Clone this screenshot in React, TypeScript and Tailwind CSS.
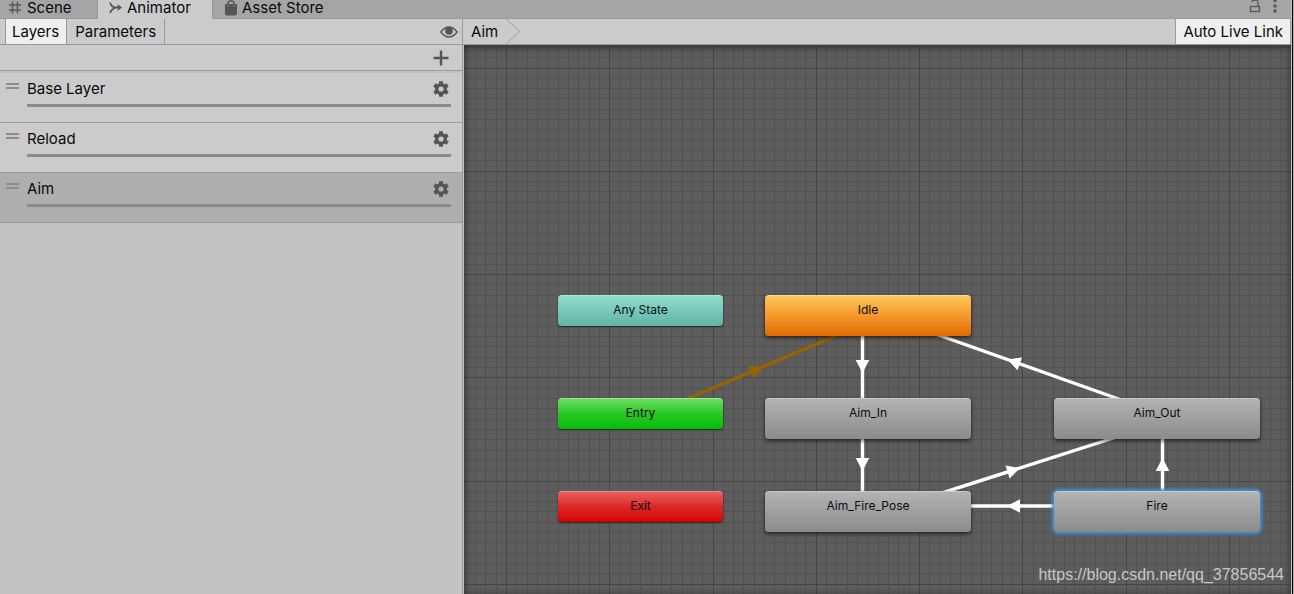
import React from "react";

type StateNode = { label: string; box: string };

const small = "h-[31px] w-[165px] shadow-[0_1px_2px_rgba(0,0,0,0.6)]";
const large = "h-[41px] w-[206px]";
const gray = "from-[#b4b4b4] to-[#8b8b8b]";
const lift = "shadow-[0_2px_4px_rgba(0,0,0,0.6)]";

const nodes: StateNode[] = [
  { label: "Any State", box: `left-[94px] top-[250px] ${small} from-[#8fdfcd] to-[#60b3a7]` },
  { label: "Idle", box: `left-[301px] top-[250px] ${large} ${lift} from-[#ffc95c] via-[#f4992a] to-[#e06c00]` },
  { label: "Entry", box: `left-[94px] top-[353px] ${small} from-[#6be062] via-[#25c822] to-[#03bc06]` },
  { label: "Aim_In", box: `left-[301px] top-[353px] ${large} ${lift} ${gray}` },
  { label: "Aim_Out", box: `left-[590px] top-[353px] ${large} ${lift} ${gray}` },
  { label: "Exit", box: `left-[94px] top-[446px] ${small} from-[#e75f5f] via-[#dd2626] to-[#d60000]` },
  { label: "Aim_Fire_Pose", box: `left-[301px] top-[446px] ${large} ${lift} ${gray}` },
  { label: "Fire", box: `left-[590px] top-[446px] ${large} shadow-[0_0_3px_2px_#3d8fdd] ${gray}` },
];

const links = [
  { from: [176, 374], to: [404, 277], tip: [299, 322], color: "#966400" },
  { from: [398.5, 280], to: [398.5, 360], tip: [398.5, 328], color: "#fff" },
  { from: [398.5, 380], to: [398.5, 450], tip: [398.5, 426], color: "#fff" },
  { from: [694, 368], to: [404, 265], tip: [543.5, 314.5], color: "#fff" },
  { from: [400, 473], to: [690, 380], tip: [556, 423], color: "#fff" },
  { from: [600, 461], to: [490, 461], tip: [543, 461], color: "#fff" },
  { from: [698.5, 460], to: [698.5, 380], tip: [698.5, 413], color: "#fff" },
];

const steps = Array.from({ length: 40 }, (_, i) => i);

function Grid() {
  return (
    <svg className="absolute inset-0 h-full w-full" aria-hidden="true">
      <defs>
        <pattern id="grid" x="42" y="23" width="413" height="413" patternUnits="userSpaceOnUse">
          {steps.map((i) => {
            const at = i * 10.325;
            const fill = i % 10 === 0 ? "#454545" : "#525252";
            return (
              <g key={i} fill={fill} shapeRendering="crispEdges">
                <rect x={Math.round(at)} width="1" height="413" />
                <rect y={Math.floor(at)} width="413" height="1" />
              </g>
            );
          })}
        </pattern>
      </defs>
      <rect width="100%" height="100%" fill="url(#grid)" />
    </svg>
  );
}

function Links() {
  return (
    <svg className="absolute inset-0 h-full w-full" aria-hidden="true">
      {links.map(({ from, to, tip, color }, i) => {
        const angle = (Math.atan2(to[1] - from[1], to[0] - from[0]) * 180) / Math.PI;
        return (
          <g key={i} fill={color} stroke={color}>
            <line x1={from[0]} y1={from[1]} x2={to[0]} y2={to[1]} strokeWidth="3.4" />
            <path
              d="M0 0L-13-6.8V6.8Z"
              stroke="none"
              transform={`translate(${tip[0]} ${tip[1]}) rotate(${angle})`}
            />
          </g>
        );
      })}
    </svg>
  );
}

function Gear() {
  return (
    <svg viewBox="0 0 16 16" className="size-4" fill="none" aria-hidden="true">
      <circle cx="8" cy="8" r="4.3" stroke="#555" strokeWidth="3.4" />
      <g stroke="#555" strokeWidth="4">
        <path d="M8 .3v3M8 12.7v3M1.3 4.1l2.6 1.5M12.1 10.4l2.6 1.5M1.3 11.9l2.6-1.5M12.1 5.6l2.6-1.5" />
      </g>
    </svg>
  );
}

function Layer({ name, selected }: { name: string; selected?: boolean }) {
  return (
    <li
      className={`flex h-[50px] gap-2 border-b border-[#999] pl-1.5 pr-[11px] ${
        selected ? "bg-[#aeaeae]" : "bg-[#cbcbcb]"
      }`}
    >
      <span className="mt-2.5 h-1.5 w-[13px] border-y-2 border-[#8c8c8c]" />
      <div className="flex-1">
        <div className="flex h-[34px] items-center justify-between border-b-[3px] border-[#8a8a8a] pr-0.5">
          <span>{name}</span>
          <button type="button" aria-label={`${name} settings`}>
            <Gear />
          </button>
        </div>
      </div>
    </li>
  );
}

export default function App() {
  return (
    <div className="bg-[#b4b4b4] pr-px">
      <div className="flex h-screen min-h-[594px] flex-col overflow-hidden border-r border-black bg-[#c2c2c2] pr-px font-['Inter',sans-serif] text-[15px] leading-5 text-[#090909]">
        <nav className="flex h-[19px] shrink-0 border-b border-[#999] bg-[#a5a5a5] leading-4" role="tablist">
          <button type="button" role="tab" className="flex h-[18px] w-[98px] items-center gap-[5px] border-r border-[#999] pb-0.5 pl-2">
            <svg viewBox="0 0 14 14" className="size-3.5 shrink-0" fill="none" stroke="#585858" strokeWidth="1.5" aria-hidden="true">
              <path d="M4.5 0.500v12M9.5 0.500v12M1 4h12M1 9h12" />
            </svg>
            Scene
          </button>
          <button type="button" role="tab" aria-selected="true" className="flex h-[19px] w-[114px] items-center gap-1 bg-[#cbcbcb] pb-[3px] pl-[11px]">
            <svg viewBox="0 0 14 14" className="size-3.5 shrink-0" fill="none" stroke="#555" strokeWidth="1.8" aria-hidden="true">
              <path d="M1 1.500C2 4.500 3.500 6.500 6.500 6.500H11M1 12C1.500 10 3 8.500 5.500 7" />
              <path d="M8.300 3L13 6.500L8.300 10L9.300 6.500Z" fill="#555" stroke="none" />
            </svg>
            Animator
          </button>
          <button type="button" role="tab" className="flex h-[18px] items-center gap-1 border-l border-[#999] pb-0.5 pl-[11px]">
            <svg viewBox="0 0 14 16" className="h-4 w-3.5 shrink-0" aria-hidden="true">
              <path d="M4 6V3a3 2 0 0 1 6 0v3" fill="none" stroke="#555" strokeWidth="1.5" />
              <path d="M1 4h12v9.500q0 2-2 2H3q-2 0-2-2Z" fill="#555" />
              <path d="M4 5v1.500M10 5v1.500" stroke="#999" />
            </svg>
            Asset Store
          </button>
          <div className="ml-auto flex gap-3 pr-3.5">
            <button type="button" aria-label="Lock" className="flex">
              <svg viewBox="0 0 12 14" className="h-3.5 w-3" fill="none" stroke="#555" strokeWidth="1.3" aria-hidden="true">
                <rect x="1.5" y="6.5" width="9" height="5" />
                <path d="M9 6V2.5Q9 0 6 0T3 2" />
              </svg>
            </button>
            <button type="button" aria-label="More" className="flex">
              <svg viewBox="0 0 4 14" className="h-3.5 w-1" fill="#555" aria-hidden="true">
                <path d="M.5 0h3v2h-3zM.5 4.500h3v3h-3zM.5 9.500h3v3h-3z" />
              </svg>
            </button>
          </div>
        </nav>

        <div className="flex min-h-0 flex-1">
          <aside className="flex w-[463px] shrink-0 flex-col border-r border-[#999]">
            <div className="flex h-[26px] shrink-0 border-b border-[#999] bg-[#cbcbcb] pl-[5px]">
              <button type="button" className="border-x border-[#999] bg-[#efefef] px-[7px] pl-1.5">Layers</button>
              <button type="button" className="border-r border-[#999] px-2">Parameters</button>
              <button type="button" aria-label="Show layers" className="ml-auto pr-1">
                <svg viewBox="0 0 18 12" className="h-3 w-[18px]" aria-hidden="true">
                  <path d="M.8 6Q9-4 17.200 6 9 16 .8 6Z" fill="none" stroke="#555" strokeWidth="1.300" />
                  <circle cx="9" cy="5" r="3.800" fill="#555" />
                </svg>
              </button>
            </div>
            <div className="flex h-[26px] shrink-0 items-center justify-end border-b border-[#999] bg-[#cbcbcb] pr-[13px]">
              <button type="button" aria-label="Add layer">
                <svg viewBox="0 0 16 16" className="size-4" stroke="#555" strokeWidth="2.4" aria-hidden="true">
                  <path d="M8 .5v15M.5 8h15" />
                </svg>
              </button>
            </div>
            <ul className="border-t-2 border-[#c2c2c2]">
              <Layer name="Base Layer" />
              <Layer name="Reload" />
              <Layer name="Aim" selected />
            </ul>
          </aside>

          <main className="flex min-w-0 flex-1 flex-col">
            <header className="flex h-[26px] shrink-0 border-b border-[#999] bg-[#cbcbcb]">
              <button type="button" className="px-2">Aim</button>
              <svg viewBox="0 0 15 25" className="h-[25px] w-[15px]" fill="none" stroke="#999" aria-hidden="true">
                <path d="M0 0l13.500 12.500L0 25" />
              </svg>
              <button type="button" className="ml-auto border-x border-[#999] bg-[#efefef] px-[7px]">Auto Live Link</button>
            </header>
            <section aria-label="State machine" className="relative ml-px flex-1 overflow-hidden bg-[#5d5d5d]">
              <Grid />
              <div className="absolute inset-0 shadow-[inset_0_2px_9px_rgba(0,0,0,0.5)]" />
              <Links />
              {nodes.map((n) => (
                <button
                  key={n.label}
                  type="button"
                  className={`absolute flex justify-center rounded-[4px] border-t border-white/30 bg-linear-to-b bg-origin-border pt-1 text-xs leading-5 text-[#0c0c0c] ${n.box}`}
                >
                  {n.label}
                </button>
              ))}
              <a
                href="https://blog.csdn.net/qq_37856544"
                className="absolute bottom-[9px] right-[7px] font-['Liberation_Sans',sans-serif] text-base leading-5 text-[#c8c8c8]"
              >
                https://blog.csdn.net/qq_37856544
              </a>
            </section>
          </main>
        </div>
      </div>
    </div>
  );
}
